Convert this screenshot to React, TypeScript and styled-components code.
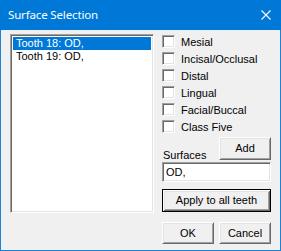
import React from 'react';
import styled, { createGlobalStyle } from 'styled-components';

const GlobalStyle = createGlobalStyle`
  html, body {
    margin: 0;
    padding: 0;
    background: #f0f0f0;
  }
  * {
    box-sizing: border-box;
  }
`;

const Window = styled.div`
  width: 281px;
  height: 251px;
  display: flex;
  flex-direction: column;
  background: #f0f0f0;
  border: 1px solid #1883d7;
  border-top: none;
  font-family: 'Liberation Sans', Arial, sans-serif;
  font-size: 11px;
  color: #000;
`;

const TitleBar = styled.div`
  height: 30px;
  flex: none;
  display: flex;
  align-items: center;
  justify-content: space-between;
  background: #0078d7;
  color: #fff;
  padding: 0 9px 1px 8px;
  margin: 0 -1px;
`;

const Title = styled.span`
  font-family: 'Noto Sans', 'Open Sans', sans-serif;
  font-size: 11.5px;
  letter-spacing: -0.15px;
`;

const CloseIcon = styled.svg`
  width: 10px;
  height: 10px;
  margin-right: 1px;
`;

const Body = styled.div`
  flex: 1;
  display: flex;
  padding: 3px 8px 0 9px;
  gap: 8px;
`;

const ListBox = styled.div`
  width: 144px;
  height: 179px;
  margin-top: 1px;
  background: #fff;
  border: 1px solid;
  border-color: #a0a0a0 #fff #fff #a0a0a0;
  box-shadow: inset 1px 1px #696969, inset -1px -1px #e3e3e3;
  padding: 2px;
`;

const ListItem = styled.div<{ $selected?: boolean }>`
  height: 13px;
  line-height: 13px;
  padding-left: 3px;
  white-space: nowrap;
  background: ${(p) => (p.$selected ? '#0078d7' : 'transparent')};
  color: ${(p) => (p.$selected ? '#fff' : '#000')};
`;

const Side = styled.div`
  width: 109px;
  display: flex;
  flex-direction: column;
`;

const CheckRow = styled.label`
  height: 17px;
  display: flex;
  align-items: center;
  gap: 6px;
  white-space: nowrap;
`;

const Box = styled.span`
  width: 13px;
  height: 13px;
  flex: none;
  background: #fff;
  border: 1px solid;
  border-color: #a0a0a0 #fff #fff #a0a0a0;
  box-shadow: inset 1px 1px #696969, inset -1px -1px #e3e3e3;
`;

const SurfacesRow = styled.div`
  margin-top: 2px;
  display: flex;
  align-items: flex-end;
  justify-content: space-between;
`;

const Label = styled.span`
  padding-left: 1px;
  line-height: 13px;
  margin-bottom: -2px;
`;

const Button = styled.button<{ $w?: number; $h?: number; $default?: boolean }>`
  width: ${(p) => p.$w ?? 52}px;
  height: ${(p) => p.$h ?? 23}px;
  padding: 0 0 1px;
  margin: 0;
  font-family: 'Liberation Sans', Arial, sans-serif;
  font-size: 11px;
  color: #000;
  background: #f0f0f0;
  border: 1px solid;
  border-color: ${(p) => (p.$default ? '#000' : '#fff #696969 #696969 #fff')};
  box-shadow: ${(p) =>
    p.$default
      ? 'inset 1px 1px #fff, inset -1px -1px #696969, inset 2px 2px #e3e3e3, inset -2px -2px #a0a0a0'
      : 'inset 1px 1px #e3e3e3, inset -1px -1px #a0a0a0'};
`;

const TextBox = styled.div`
  margin-top: 2px;
  height: 20px;
  background: #fff;
  border: 1px solid;
  border-color: #a0a0a0 #fff #fff #a0a0a0;
  box-shadow: inset 1px 1px #696969, inset -1px -1px #e3e3e3;
  padding: 0 3px;
  display: flex;
  align-items: center;
`;

const ApplyWrap = styled.div`
  margin-top: 7px;
`;

const ButtonRow = styled.div`
  margin-top: 10px;
  display: flex;
  gap: 5px;
`;

const surfaces = ['Mesial', 'Incisal/Occlusal', 'Distal', 'Lingual', 'Facial/Buccal', 'Class Five'];

export default function App() {
  return (
    <>
      <GlobalStyle />
      <Window>
        <TitleBar>
          <Title>Surface Selection</Title>
          <CloseIcon viewBox="0 0 10 10">
            <path d="M0.5 0.5 L9.5 9.5 M9.5 0.5 L0.5 9.5" stroke="#fff" strokeWidth="1.1" fill="none" />
          </CloseIcon>
        </TitleBar>
        <Body>
          <ListBox>
            <ListItem $selected>Tooth 18: OD,</ListItem>
            <ListItem>Tooth 19: OD,</ListItem>
          </ListBox>
          <Side>
            {surfaces.map((s) => (
              <CheckRow key={s}>
                <Box />
                {s}
              </CheckRow>
            ))}
            <SurfacesRow>
              <Label>Surfaces</Label>
              <Button>Add</Button>
            </SurfacesRow>
            <TextBox>OD,</TextBox>
            <ApplyWrap>
              <Button $w={109} $default>
                Apply to all teeth
              </Button>
            </ApplyWrap>
            <ButtonRow>
              <Button $h={22}>OK</Button>
              <Button $h={22}>Cancel</Button>
            </ButtonRow>
          </Side>
        </Body>
      </Window>
    </>
  );
}
